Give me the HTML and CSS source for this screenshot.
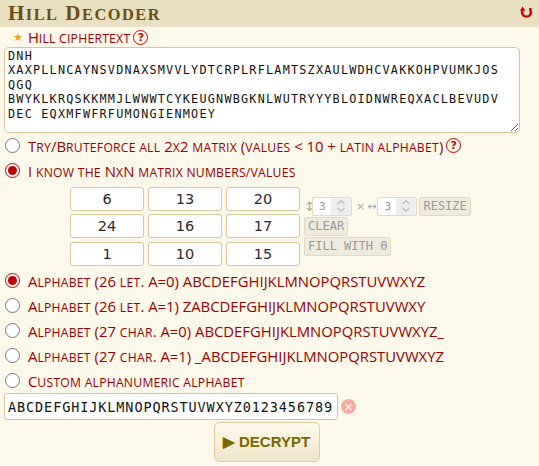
FILE: index.html
```html
<!DOCTYPE html>
<html lang="en">
<head>
<meta charset="utf-8">
<title>Hill Decoder</title>
<link rel="stylesheet" href="styles.css">
</head>
<body>
<header class="head">
  <h1 class="title">H<span class="tsc">ill</span> D<span class="tsc">ecoder</span></h1>
  <svg class="reload" width="13" height="13" viewBox="0 0 13 13"><path d="M2.6 4.2 A4.4 4.4 0 1 0 10.4 4.2 L10.4 2" fill="none" stroke="#cc0000" stroke-width="2.4"/><path d="M0 4.8 L5.4 4.8 L2.6 0.6 Z" fill="#cc0000"/></svg>
</header>
<main class="panel">
  <div class="label-row">
    <span class="star">★</span>
    <span class="lbl">H<span class="sc">ill ciphertext</span></span>
    <span class="help">?</span>
  </div>
  <textarea class="cipher" spellcheck="false">DNH
XAXPLLNCAYNSVDNAXSMVVLYDTCRPLRFLAMTSZXAULWDHCVAKKOHPVUMKJOS
QGQ
BWYKLKRQSKKMMJLWWWTCYKEUGNWBGKNLWUTRYYYBLOIDNWREQXACLBEVUDV
DEC EQXMFWFRFUMONGIENMOEY</textarea>
  <label class="opt"><input type="radio" name="mode"><span class="lbl">T<span class="sc">ry</span>/B<span class="sc">ruteforce all</span> 2<span class="sc">x</span>2 <span class="sc">matrix</span> (<span class="sc">values</span> &lt; 10 + <span class="sc">latin alphabet</span>)</span><span class="help">?</span></label>
  <label class="opt"><input type="radio" name="mode" checked><span class="lbl">I <span class="sc">know the</span> N<span class="sc">x</span>N <span class="sc">matrix numbers/values</span></span></label>
  <div class="matrix-block">
    <div class="matrix">
      <div class="cell">6</div><div class="cell">13</div><div class="cell">20</div>
      <div class="cell">24</div><div class="cell">16</div><div class="cell">17</div>
      <div class="cell">1</div><div class="cell">10</div><div class="cell">15</div>
    </div>
    <div class="controls">
      <div class="ctl-row">
        <span class="sym vert">↕</span>
        <span class="num">3<span class="spin"><svg width="10" height="14" viewBox="0 0 10 14"><path d="M1.5 5 L5 1.8 L8.5 5 M1.5 9 L5 12.2 L8.5 9" fill="none" stroke="#bbb" stroke-width="1.2"/></svg></span></span>
        <span class="sym times">×</span>
        <span class="sym">↔</span>
        <span class="num">3<span class="spin"><svg width="10" height="14" viewBox="0 0 10 14"><path d="M1.5 5 L5 1.8 L8.5 5 M1.5 9 L5 12.2 L8.5 9" fill="none" stroke="#bbb" stroke-width="1.2"/></svg></span></span>
        <span class="btn">RESIZE</span>
      </div>
      <span class="btn">CLEAR</span>
      <span class="btn">FILL WITH 0</span>
    </div>
  </div>
  <div class="alpha-list">
    <label class="opt"><input type="radio" name="alpha" checked><span class="lbl">A<span class="sc">lphabet</span> (26 <span class="sc">let</span>. A=0) ABCDEFGHIJKLMNOPQRSTUVWXYZ</span></label>
    <label class="opt"><input type="radio" name="alpha"><span class="lbl">A<span class="sc">lphabet</span> (26 <span class="sc">let</span>. A=1) ZABCDEFGHIJKLMNOPQRSTUVWXY</span></label>
    <label class="opt"><input type="radio" name="alpha"><span class="lbl">A<span class="sc">lphabet</span> (27 <span class="sc">char</span>. A=0) ABCDEFGHIJKLMNOPQRSTUVWXYZ_</span></label>
    <label class="opt"><input type="radio" name="alpha"><span class="lbl">A<span class="sc">lphabet</span> (27 <span class="sc">char</span>. A=1) _ABCDEFGHIJKLMNOPQRSTUVWXYZ</span></label>
    <label class="opt"><input type="radio" name="alpha"><span class="lbl">C<span class="sc">ustom alphanumeric alphabet</span></span></label>
  </div>
  <div class="custom-row">
    <input class="custom" type="text" value="ABCDEFGHIJKLMNOPQRSTUVWXYZ0123456789" spellcheck="false">
    <span class="clear-x">×</span>
  </div>
  <div class="submit-row">
    <button class="decrypt" type="button">▶ DECRYPT</button>
  </div>
</main>
</body>
</html>
```

FILE: styles.css
```css
html, body {
  margin: 0;
  padding: 0;
  background: #fcf8ea;
}
body {
  width: 539px;
  height: 466px;
  overflow: hidden;
  font-family: "Open Sans", sans-serif;
}
.head {
  height: 27px;
  background: #e9dfc3;
  display: flex;
  align-items: center;
  justify-content: space-between;
  padding: 0 6px 0 8px;
}
.title {
  margin: 0;
  font-family: "Liberation Serif", serif;
  font-weight: bold;
  font-size: 21px;
  color: #6a4d15;
  letter-spacing: 1.5px;
}
.tsc {
  font-size: 0.78em;
  text-transform: uppercase;
}
.reload {
  display: block;
  margin-top: -3px;
}
.panel {
  padding: 0 19px 0 4px;
}
.label-row {
  height: 20px;
  display: flex;
  align-items: center;
  padding-left: 9px;
}
.star {
  color: #f0a020;
  font-size: 11px;
  margin-right: 5px;
  font-family: "DejaVu Sans", sans-serif;
}
.lbl {
  color: #990000;
  font-size: 14.85px;
}
.sc {
  font-size: 0.82em;
  letter-spacing: 0.25px;
  text-transform: uppercase;
}
.help {
  display: inline-flex;
  width: 13px;
  height: 13px;
  border: 1.5px solid #cc0000;
  border-radius: 50%;
  align-items: center;
  justify-content: center;
  color: #cc0000;
  font-size: 11px;
  font-weight: bold;
  font-family: "DejaVu Sans", sans-serif;
  margin-left: 3px;
  line-height: 1;
}
.cipher {
  display: block;
  box-sizing: border-box;
  width: 516px;
  height: 86px;
  margin: 0;
  padding: 1px 3px;
  border: 1px solid #d6c495;
  border-radius: 5px;
  background: #fff;
  font-family: "DejaVu Sans Mono", monospace;
  font-size: 11.8px;
  letter-spacing: 1.22px;
  line-height: 14.4px;
  color: #111;
  resize: both;
  overflow: hidden;
}
.opt {
  height: 25px;
  display: flex;
  align-items: center;
}
.opt input {
  width: 15px;
  height: 15px;
  margin: 0 8px 0 1px;
  accent-color: #c00000;
}
.matrix-block {
  display: flex;
  align-items: center;
  margin: 3.5px 0 2.5px 66px;
  gap: 4px;
}
.matrix {
  display: grid;
  grid-template-columns: repeat(3, 74px);
  grid-auto-rows: 24px;
  column-gap: 4px;
  row-gap: 3.5px;
}
.cell {
  background: #fff;
  border: 1px solid #d9c79c;
  border-radius: 3px;
  display: flex;
  align-items: center;
  justify-content: center;
  font-family: "DejaVu Sans", sans-serif;
  font-size: 14.5px;
  color: #2a2a2a;
}
.controls {
  display: flex;
  flex-direction: column;
  align-items: flex-start;
  gap: 1px;
}
.ctl-row {
  display: flex;
  align-items: center;
  gap: 0;
}
.sym {
  color: #aaa;
  font-family: "DejaVu Sans", sans-serif;
  font-size: 11px;
}
.vert {
  font-size: 13px;
  width: 7px;
}
.times {
  margin: 0 2px 0 4px;
}
.num {
  display: flex;
  align-items: center;
  box-sizing: border-box;
  width: 40px;
  height: 19px;
  border: 1px solid #e6dab7;
  border-radius: 2px;
  background: #fff;
  font-family: "DejaVu Sans Mono", monospace;
  font-size: 11px;
  color: #999;
  padding-left: 6px;
  margin-left: 1px;
  justify-content: space-between;
}
.ctl-row .btn {
  margin-left: 2px;
}
.spin {
  width: 20px;
  height: 17px;
  background: #eeeeee;
  display: flex;
  align-items: center;
  justify-content: center;
}
.btn {
  display: inline-block;
  background: #efebdd;
  border: 1px solid #e3dac0;
  border-radius: 2px;
  font-family: "DejaVu Sans Mono", monospace;
  font-size: 12px;
  color: #999;
  padding: 2px 3px;
  line-height: 13px;
}
.alpha-list {
  display: flex;
  flex-direction: column;
}
.custom-row {
  display: flex;
  align-items: center;
  gap: 3px;
}
.custom {
  box-sizing: border-box;
  width: 334px;
  height: 27px;
  margin: 0;
  border: 1px solid #d6c495;
  border-radius: 3px;
  background: #fff;
  font-family: "DejaVu Sans Mono", monospace;
  font-size: 13.5px;
  letter-spacing: 0.9px;
  color: #111;
  padding: 0 3px;
}
.clear-x {
  width: 15px;
  height: 15px;
  border-radius: 50%;
  background: #f4aa9f;
  color: #fff;
  display: flex;
  align-items: center;
  justify-content: center;
  font-family: "DejaVu Sans", sans-serif;
  font-size: 12px;
  line-height: 1;
}
.submit-row {
  display: flex;
  justify-content: center;
  padding-top: 2px;
}
.decrypt {
  width: 106px;
  height: 40px;
  border: 1px solid #dccb9c;
  border-radius: 5px;
  background: linear-gradient(#fdf9ec, #efe5c8);
  color: #776600;
  font-family: "Liberation Sans", sans-serif;
  font-weight: bold;
  font-size: 15px;
  margin-left: 9px;
  padding: 0;
}
```
